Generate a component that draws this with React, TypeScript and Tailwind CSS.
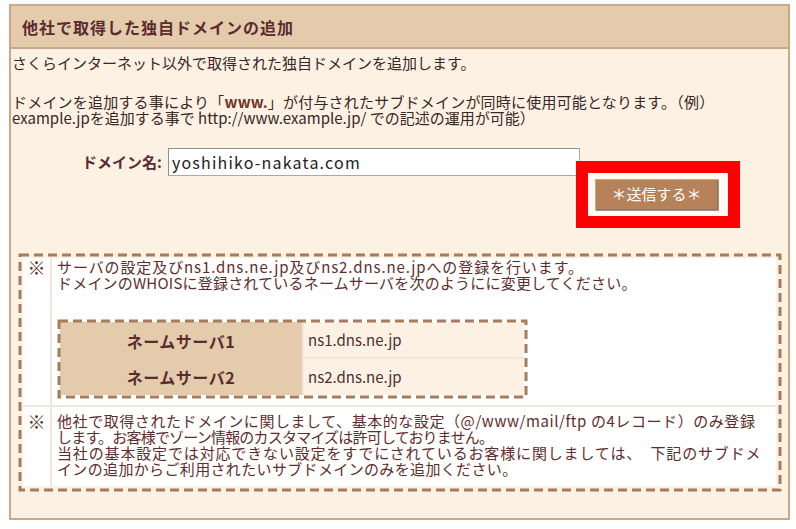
const JP = "font-['Noto_Sans_CJK_JP',sans-serif]";

const NAME_SERVERS = [
  { label: "ネームサーバ1", value: "ns1.dns.ne.jp", h: "h-[37px]" },
  { label: "ネームサーバ2", value: "ns2.dns.ne.jp", h: "h-[36px]" },
];

// dashed frame drawn with svg so the dash rhythm matches (9 on / 5 off)
function DashedFrame({ children, className }: { children: React.ReactNode; className?: string }) {
  return (
    <div className={`relative border-[3px] border-transparent ${className ?? ""}`}>
      <svg className="pointer-events-none absolute inset-[-1.5px] h-[calc(100%+3px)] w-[calc(100%+3px)] overflow-visible">
        <rect x="0" y="0" width="100%" height="100%" fill="none" stroke="#a67d5c" strokeWidth="3" strokeDasharray="9 5" />
      </svg>
      {children}
    </div>
  );
}

function NoteRow({ children, className }: { children: React.ReactNode; className?: string }) {
  return (
    <div className="flex gap-[2px]">
      <div className={`w-[27px] shrink-0 bg-white text-center text-[18px] leading-[16px] text-[#5e2e2e] ${className ?? ""}`}>
        ※
      </div>
      <div className={`flex-1 bg-white pl-[5px] ${className ?? ""}`}>{children}</div>
    </div>
  );
}

export default function App() {
  return (
    <div className={`h-[529px] w-[796px] bg-white pl-[9px] pt-[4px] ${JP}`}>
      <div className="h-[516px] w-[781px] border-2 border-[#c9a88a] bg-[#fdf1e3]">
        {/* header */}
        <div className="flex h-[43px] items-center border-b-2 border-[#c9a88a] bg-[#e3cbab] pl-[11px]">
          <span className="text-[16px] font-bold tracking-[1px] text-[#5c2b30]">
            他社で取得した独自ドメインの追加
          </span>
        </div>

        <div className="pl-[1px] text-[15px] text-[#3a2626]">
          <p className="mt-[5px] whitespace-nowrap leading-[17px]">
            さくらインターネット以外で取得された独自ドメインを追加します。
          </p>
          <p className="mt-[23px] whitespace-nowrap leading-[16px]">
            <span className="tracking-[0.2px]">
              ドメインを追加する事により「<b className="text-[#6d3526]">www.</b>」が付与されたサブドメインが同時に使用可能となります。（例）
            </span>
            <br />
            example.jpを追加する事で http://www.example.jp/ での記述の運用が可能）
          </p>
        </div>

        {/* domain form */}
        <div className="mt-[22px] flex items-center gap-[6px]">
          <label className="w-[151px] text-right text-[15px] font-bold text-[#5c2b30]">ドメイン名:</label>
          <input
            defaultValue="yoshihiko-nakata.com"
            className="h-[28px] w-[412px] border border-[#a9a9a9] border-l-[#8f8f8f] border-t-[#8f8f8f] bg-white px-[3px] text-[16px] tracking-[1.2px] text-[#222] outline-none"
          />
        </div>

        <div className="ml-[584px] mt-[3px] w-[123px]">
          <div className="relative">
            <div className="absolute left-[-19px] top-[-18px] h-[67px] w-[164px] border-[12px] border-[#ff0000] bg-[#fffaf4]" />
            <button className="relative flex h-[31px] w-[123px] items-center justify-center border border-[#d6a47c] border-b-[#8d7868] border-r-[#8d7868] bg-[#b5825a] text-[15px] text-white shadow-[1px_1px_0_#a39386]">
              ＊送信する＊
            </button>
          </div>
        </div>

        {/* notes */}
        <DashedFrame className="ml-[7px] mt-[43px] w-[763px] p-[2px]">
          <div className="flex flex-col gap-[2px] bg-[#efe6de] text-[15px] leading-[16px] text-[#5e2e2e]">
            <NoteRow className="pt-[1px]">
              <div className="whitespace-nowrap">
                <div className="tracking-[0.9px]">サーバの設定及びns1.dns.ne.jp及びns2.dns.ne.jpへの登録を行います。</div>
                <div className="tracking-[0.2px]">ドメインのWHOISに登録されているネームサーバを次のようにに変更してください。</div>
              </div>
              <DashedFrame className="mb-[7px] mt-[28px] w-[470px]">
                {NAME_SERVERS.map((ns, i) => (
                  <div key={ns.label} className={`flex ${ns.h}`}>
                    <div className="flex w-[242px] items-center justify-center bg-[#e3cbab] text-[16px] font-bold tracking-[0.5px] text-[#5c2b30]">
                      {ns.label}
                    </div>
                    <div
                      className={`flex flex-1 items-center border-l-2 border-[#efe6de] bg-[#fdf1e3] pl-[4px] text-[15px] text-[#4a3030] ${
                        i === 0 ? "border-b-2" : ""
                      }`}
                    >
                      {ns.value}
                    </div>
                  </div>
                ))}
              </DashedFrame>
            </NoteRow>
            <NoteRow className="pb-[9px] pt-[6px]">
              <div className="whitespace-nowrap">
                <div className="tracking-[0.57px]">
                  他社で取得されたドメインに関しまして、基本的な設定（@/www/mail/ftp の4レコード）のみ登録
                </div>
                <div className="tracking-[-0.8px]">します。お客様でゾーン情報のカスタマイズは許可しておりません。</div>
                <div className="tracking-[0.85px]">
                  当社の基本設定では対応できない設定をすでにされているお客様に関しましては、　下記のサブドメ
                </div>
                <div className="tracking-[0.35px]">インの追加からご利用されたいサブドメインのみを追加ください。</div>
              </div>
            </NoteRow>
          </div>
        </DashedFrame>
      </div>
    </div>
  );
}
